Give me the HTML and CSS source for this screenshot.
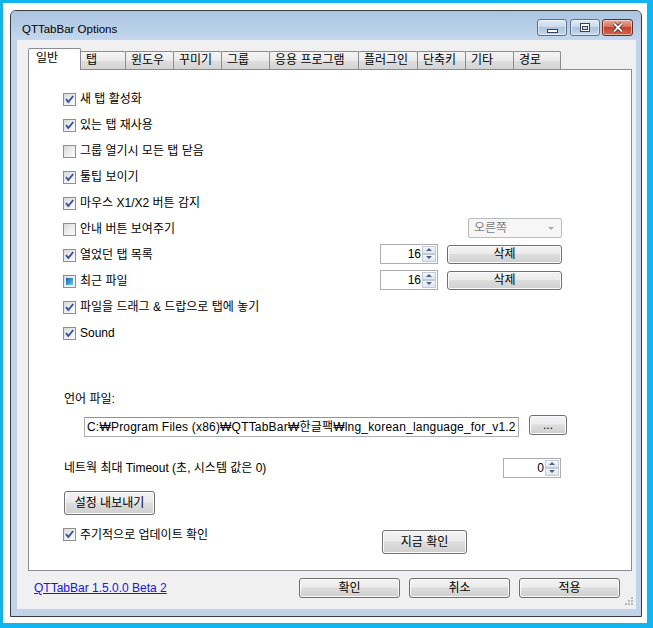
FILE: index.html
```html
<!DOCTYPE html>
<html lang="ko">
<head>
    <meta charset="UTF-8">
    <title>QTTabBar Options</title>
    <link rel="stylesheet" href="styles.css">
</head>
<body>
    <div class="screen">
        <div class="window">
            <!-- 제목 표시줄 -->
            <div class="titlebar">
                <span class="title">QTTabBar Options</span>
                <div class="caption">
                    <span class="cbtn min"><i></i></span>
                    <span class="cbtn max"><i></i></span>
                    <span class="cbtn close">
                        <svg viewBox="0 0 14 11"><path class="x-out" d="M3 1.5l8 8M11 1.5l-8 8"/><path class="x-in" d="M3 1.5l8 8M11 1.5l-8 8"/></svg>
                    </span>
                </div>
            </div>

            <div class="client">
                <!-- 탭 -->
                <div class="tabs">
                    <div class="tab active w53">일반</div>
                    <div class="tab w46">탭</div>
                    <div class="tab w49">윈도우</div>
                    <div class="tab w49">꾸미기</div>
                    <div class="tab w49">그룹</div>
                    <div class="tab w90">응용 프로그램</div>
                    <div class="tab w60">플러그인</div>
                    <div class="tab w49">단축키</div>
                    <div class="tab w49">기타</div>
                    <div class="tab w48">경로</div>
                </div>

                <div class="panel">
                    <div class="row"><span class="cb"><svg viewBox="0 0 11 11"><path d="M2 5l2.3 3 4.9-6"/></svg></span><span class="label">새 탭 활성화</span></div>
                    <div class="row"><span class="cb"><svg viewBox="0 0 11 11"><path d="M2 5l2.3 3 4.9-6"/></svg></span><span class="label">있는 탭 재사용</span></div>
                    <div class="row"><span class="cb"></span><span class="label">그룹 열기시 모든 탭 닫음</span></div>
                    <div class="row"><span class="cb"><svg viewBox="0 0 11 11"><path d="M2 5l2.3 3 4.9-6"/></svg></span><span class="label">툴팁 보이기</span></div>
                    <div class="row"><span class="cb"><svg viewBox="0 0 11 11"><path d="M2 5l2.3 3 4.9-6"/></svg></span><span class="label">마우스 X1/X2 버튼 감지</span></div>
                    <div class="row">
                        <span class="cb"></span><span class="label">안내 버튼 보여주기</span>
                        <span class="combo">오른쪽</span>
                    </div>
                    <div class="row">
                        <span class="cb"><svg viewBox="0 0 11 11"><path d="M2 5l2.3 3 4.9-6"/></svg></span><span class="label">열었던 탭 목록</span>
                        <span class="spin"><span class="spin-val">16</span><span class="spin-btns"><i class="up"></i><i class="down"></i></span></span>
                        <button class="btn del">삭제</button>
                    </div>
                    <div class="row">
                        <span class="cb mixed"></span><span class="label">최근 파일</span>
                        <span class="spin"><span class="spin-val">16</span><span class="spin-btns"><i class="up"></i><i class="down"></i></span></span>
                        <button class="btn del">삭제</button>
                    </div>
                    <div class="row"><span class="cb"><svg viewBox="0 0 11 11"><path d="M2 5l2.3 3 4.9-6"/></svg></span><span class="label">파일을 드래그 &amp; 드랍으로 탭에 놓기</span></div>
                    <div class="row"><span class="cb"><svg viewBox="0 0 11 11"><path d="M2 5l2.3 3 4.9-6"/></svg></span><span class="label">Sound</span></div>

                    <!-- 언어 파일 -->
                    <div class="lang-label">언어 파일:</div>
                    <div class="lang-row">
                        <div class="textbox">C:₩Program Files (x86)₩QTTabBar₩한글팩₩lng_korean_language_for_v1.2</div>
                        <button class="btn dots">...</button>
                    </div>

                    <div class="timeout-row">
                        <span class="label">네트웍 최대 Timeout (초, 시스템 값은 0)</span>
                        <span class="spin"><span class="spin-val">0</span><span class="spin-btns"><i class="up"></i><i class="down"></i></span></span>
                    </div>

                    <button class="btn export">설정 내보내기</button>

                    <div class="update-row">
                        <span class="cb"><svg viewBox="0 0 11 11"><path d="M2 5l2.3 3 4.9-6"/></svg></span><span class="label">주기적으로 업데이트 확인</span>
                        <button class="btn check-now">지금 확인</button>
                    </div>
                </div>

                <!-- 하단 -->
                <div class="footer">
                    <a class="version" href="#">QTTabBar 1.5.0.0 Beta 2</a>
                    <button class="btn foot">확인</button>
                    <button class="btn foot">취소</button>
                    <button class="btn foot">적용</button>
                </div>

                <svg class="grip" viewBox="0 0 10 10">
                    <rect x="8" y="0" width="2" height="2"/>
                    <rect x="5" y="3" width="2" height="2"/><rect x="8" y="3" width="2" height="2"/>
                    <rect x="2" y="6" width="2" height="2"/><rect x="5" y="6" width="2" height="2"/><rect x="8" y="6" width="2" height="2"/>
                </svg>
            </div>
        </div>
    </div>
</body>
</html>
```

FILE: styles.css
```css
* {
    margin: 0;
    padding: 0;
    box-sizing: border-box;
}

body {
    width: 653px;
    height: 628px;
    background: #fff;
    font: 12px/14px "Liberation Sans", "Noto Sans CJK KR", sans-serif;
    color: #000;
    overflow: hidden;
}

.screen {
    width: 653px;
    height: 628px;
    border: solid #10b4ee;
    border-width: 3px 6px 5px 3px;
    padding: 7px 5px 6px 7px;
}

/* 창 */
.window {
    height: 100%;
    display: flex;
    flex-direction: column;
    border: 1px solid #3a3a3a;
    border-radius: 6px 6px 0 0;
    background: #bfd4eb;
}

.titlebar {
    height: 29px;
    flex: none;
    display: flex;
    align-items: flex-start;
    padding: 0 8px 0 11px;
    border-radius: 5px 5px 0 0;
    background: linear-gradient(#abc4e1, #c3d7ed);
}

.title {
    flex: 1;
    padding-top: 11px;
    font-size: 11.5px;
}

.caption {
    display: flex;
    margin-top: 8px;
}

.cbtn {
    width: 30px;
    height: 17px;
    border: 1px solid #5d6e88;
    border-radius: 3px;
    display: flex;
    align-items: center;
    justify-content: center;
    background: linear-gradient(#e0eaf5, #cbdaec 45%, #adc3de 50%, #c4d8ee);
    box-shadow: inset 0 0 0 1px rgba(255,255,255,0.5);
}

.cbtn.max {
    margin-left: 3px;
}

.cbtn.close {
    width: 31px;
    margin-left: 2px;
    border-color: #6b2b22;
    background: linear-gradient(#e9a99b, #d7735f 45%, #c4432c 50%, #d2674e);
}

.min i {
    width: 11px;
    height: 4px;
    margin-top: 6px;
    border: 1px solid #33415a;
    background: #fff;
}

.max i {
    width: 10px;
    height: 9px;
    border: 1px solid #33415a;
    background: #fff;
    position: relative;
}

.max i::after {
    content: "";
    position: absolute;
    left: 1px;
    top: 2px;
    right: 1px;
    bottom: 1px;
    border: 1px solid #33415a;
    background: #c9d9ec;
}

.close svg {
    width: 14px;
    height: 11px;
}

.x-out {
    fill: none;
    stroke: #4a1c16;
    stroke-width: 3.4;
}

.x-in {
    fill: none;
    stroke: #fff;
    stroke-width: 1.8;
}

/* 클라이언트 영역 */
.client {
    flex: 1;
    margin: 0 5px 7px 6px;
    background: #f0f0f0;
    position: relative;
}

.tabs {
    display: flex;
    align-items: flex-end;
    height: 21px;
    margin: 8px 0 0 11px;
    position: relative;
    z-index: 1;
}

.tab {
    height: 18px;
    margin-left: -1px;
    padding: 1px 0 0 5px;
    border: 1px solid #898c95;
    border-bottom: none;
    border-radius: 2px 2px 0 0;
    background: linear-gradient(#f4f4f4, #ebebeb 50%, #dddddd 51%, #d4d4d4);
    white-space: nowrap;
}

.tab.active {
    height: 22px;
    margin-left: 0;
    margin-bottom: -1px;
    padding: 2px 0 0 7px;
    background: #fff;
    position: relative;
    z-index: 2;
}

.w46 { width: 46px; }
.w48 { width: 48px; }
.w49 { width: 49px; }
.w53 { width: 53px; }
.w60 { width: 60px; }
.w90 { width: 90px; }

.panel {
    height: 502px;
    margin: 0 4px 0 11px;
    padding: 16px 69px 0 34px;
    border: 1px solid #898c95;
    background: #fff;
}

.row {
    display: flex;
    align-items: center;
    height: 26px;
}

.label {
    flex: 1;
    white-space: nowrap;
}

/* 체크박스 */
.cb {
    width: 13px;
    height: 13px;
    flex: none;
    margin-right: 4px;
    border: 1px solid #8e8f8f;
    background: linear-gradient(135deg, #d9d9d9, #f0f0f0 60%, #fbfbfb);
}

.cb svg {
    display: block;
    width: 11px;
    height: 11px;
}

.cb path {
    fill: none;
    stroke: #34509f;
    stroke-width: 1.9;
}

.cb.mixed::after {
    content: "";
    display: block;
    width: 7px;
    height: 7px;
    margin: 2px;
    background: linear-gradient(135deg, #1a5ea5, #3d96d2 50%, #74cdf3);
}

/* 콤보/스핀 */
.combo {
    width: 94px;
    height: 20px;
    margin-top: -3px;
    padding-left: 5px;
    display: flex;
    align-items: center;
    border: 1px solid #b9bcbf;
    border-radius: 2px;
    background: #f6f6f6;
    color: #7d7d7d;
    position: relative;
}

.combo::after {
    content: "";
    position: absolute;
    right: 7px;
    top: 8px;
    border: 3px solid transparent;
    border-top: 3px solid #a8a8a8;
}

.spin {
    width: 58px;
    height: 20px;
    flex: none;
    display: flex;
    padding: 1px;
    border: 1px solid #abadb3;
    background: #fff;
}

.row .spin {
    margin-top: -3px;
}

.spin-val {
    flex: 1;
    text-align: right;
    line-height: 16px;
    padding-right: 1px;
}

.spin-btns {
    width: 14px;
    display: flex;
    flex-direction: column;
}

.spin-btns i {
    flex: 1;
    position: relative;
    border: 1px solid #c2cad4;
    background: linear-gradient(#f5f8fb, #dde5ee);
}

.spin-btns i::after {
    content: "";
    position: absolute;
    left: 3px;
    border: 3px solid transparent;
}

.spin-btns .up::after {
    top: -2px;
    border-bottom: 3px solid #4c5f86;
}

.spin-btns .down::after {
    top: 1px;
    border-top: 3px solid #4c5f86;
}

/* 버튼 */
.btn {
    height: 20px;
    flex: none;
    font: inherit;
    color: #000;
    border: 1px solid #707070;
    border-radius: 3px;
    background: linear-gradient(#f3f3f3, #ebebeb 45%, #dddddd 50%, #cfcfcf);
    box-shadow: inset 0 0 0 1px #fbfbfb;
}

.btn.del {
    width: 115px;
    height: 19px;
    margin-left: 9px;
    margin-top: -2px;
}

.lang-label {
    margin: 46px 0 0 1px;
}

.lang-row {
    display: flex;
    margin-top: 11px;
}

.textbox {
    width: 435px;
    height: 20px;
    flex: none;
    margin-left: 21px;
    padding: 2px 0 0 2px;
    border: 1px solid #abadb3;
    border-top-color: #8f949c;
    letter-spacing: 0.2px;
    overflow: hidden;
    white-space: nowrap;
}

.btn.dots {
    width: 38px;
    margin: -2px 0 0 10px;
}

.timeout-row {
    display: flex;
    align-items: center;
    height: 20px;
    margin-top: 21px;
    padding-left: 1px;
}

.timeout-row .spin {
    margin-right: 1px;
}

.btn.export {
    display: block;
    width: 91px;
    height: 24px;
    margin: 13px 0 0 1px;
}

.update-row {
    display: flex;
    align-items: flex-start;
    margin-top: 13px;
}

.btn.check-now {
    width: 85px;
    height: 24px;
    margin: 2px 95px 0 0;
}

/* 하단 */
.footer {
    display: flex;
    align-items: center;
    height: 20px;
    margin: 7px 16px 0 17px;
}

.version {
    flex: 1;
    color: #1515e6;
    text-decoration: underline;
}

.btn.foot {
    width: 101px;
    margin-left: 9px;
}

.grip {
    position: absolute;
    right: 3px;
    bottom: 2px;
    width: 10px;
    height: 10px;
    fill: #b9b9b9;
}
```
